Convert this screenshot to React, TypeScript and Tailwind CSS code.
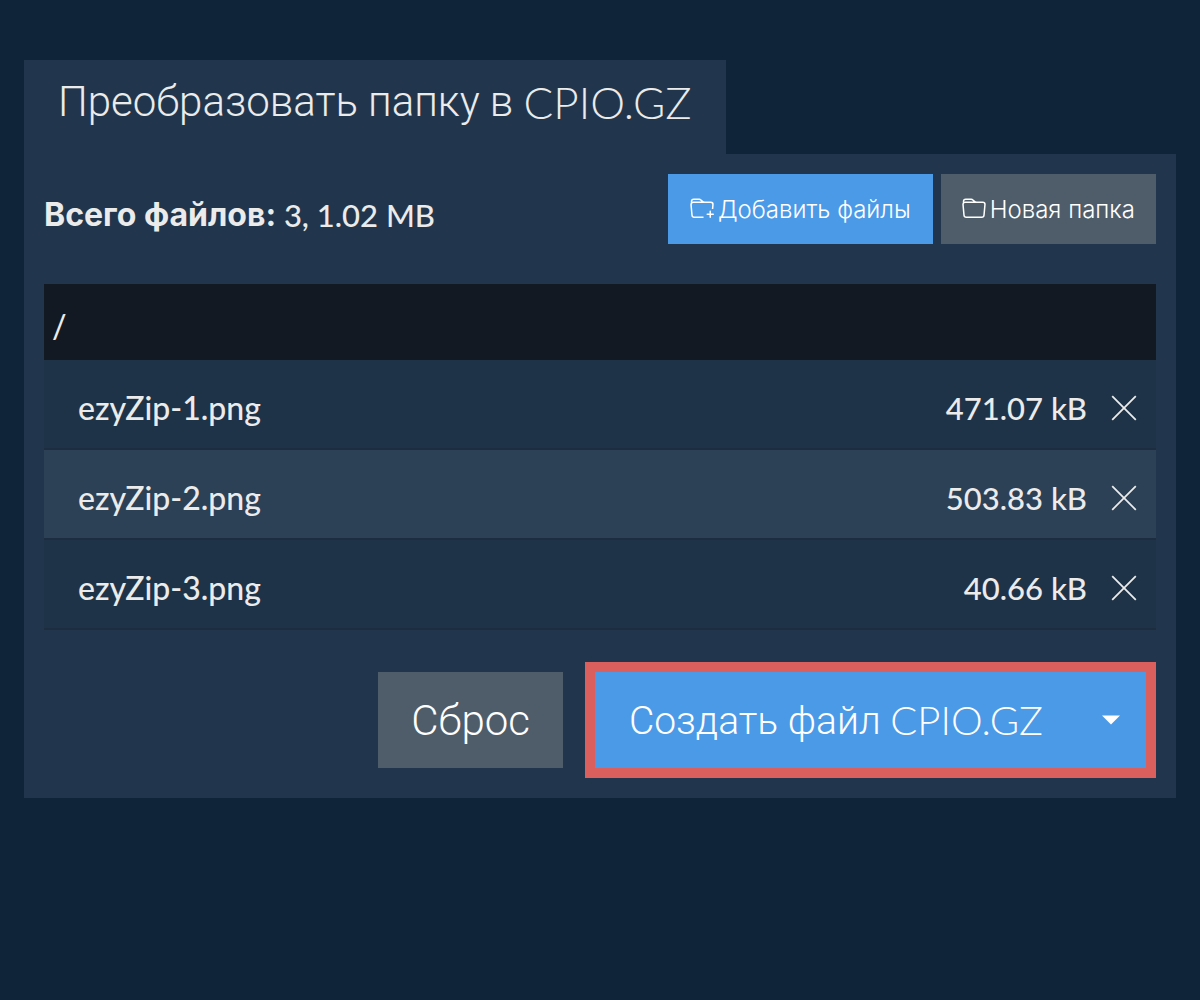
import { BsFolder, BsFolderPlus } from "react-icons/bs";

const files = [
  { name: "ezyZip-1.png", size: "471.07 kB" },
  { name: "ezyZip-2.png", size: "503.83 kB" },
  { name: "ezyZip-3.png", size: "40.66 kB" },
];

function CloseIcon() {
  return (
    <svg viewBox="0 0 26 26" className="size-6.5" fill="none" stroke="currentColor" strokeWidth="1.8" aria-hidden="true">
      <path d="M1.2 1.2 24.8 24.8M24.8 1.2 1.2 24.8" />
    </svg>
  );
}

export default function App() {
  return (
    <main className="min-h-screen bg-[#0f2438] px-6 py-15 font-['Lato',sans-serif] text-[#ebebeb]">
      <h1 className="flex h-[94px] w-fit items-start bg-[#21364c] px-[34px] pt-4 leading-[52px] font-light whitespace-pre">
        <span className="font-['Roboto',sans-serif] text-[42px]">Преобразовать папку в </span>
        <span className="text-[44px]">CPIO.GZ</span>
      </h1>

      <section className="bg-[#21364c] p-5">
        <div className="flex items-center justify-between">
          <p className="flex pt-3 text-[31px] leading-10 font-medium whitespace-pre">
            <strong className="font-['Inter',sans-serif] text-[32px] font-bold">Всего файлов:</strong>
            <span> 3, 1.02 MB</span>
          </p>
          <div className="flex gap-2 font-['Inter',sans-serif] text-2xl font-light text-white">
            <button type="button" className="flex h-[70px] items-center gap-1 bg-[#4b9ae8] px-[22px]">
              <BsFolderPlus className="size-6" />
              <span className="pt-0.5">Добавить файлы</span>
            </button>
            <button type="button" className="flex h-[70px] items-center gap-1 bg-[#4f5d6b] px-[21px]">
              <BsFolder className="size-6" />
              <span className="pt-0.5">Новая папка</span>
            </button>
          </div>
        </div>

        <table className="mt-10 w-full border-separate border-spacing-0 text-[32px] leading-10 font-medium">
          <thead>
            <tr className="h-[76px] bg-[#121922]">
              <th colSpan={3} scope="colgroup" className="px-2 pt-2 text-left font-medium">/</th>
            </tr>
          </thead>
          <tbody>
            {files.map((file) => (
              <tr key={file.name} className="h-[90px] bg-[#1f3348] even:bg-[#2c4056]">
                <td className="border-b-2 border-[#1c2d3f] pt-2 pl-[34px]">{file.name}</td>
                <td className="border-b-2 border-[#1c2d3f] pt-2 text-right text-[31px]">{file.size}</td>
                <td className="w-[69px] border-b-2 border-[#1c2d3f] pt-2 pr-[19px]">
                  <button type="button" aria-label={`Удалить ${file.name}`} className="ml-auto block">
                    <CloseIcon />
                  </button>
                </td>
              </tr>
            ))}
          </tbody>
        </table>

        <div className="mt-8 flex items-center justify-end gap-[22px] leading-12 font-light text-white">
          <button type="button" className="h-24 bg-[#4f5d6b] px-[33px] pt-0.5 font-['Roboto',sans-serif] text-[42px]">
            Сброс
          </button>
          <div className="flex border-10 border-[#db5f5c] bg-[#4b9ae8]">
            <button type="button" className="flex h-24 items-center pl-[34px] text-[40px] whitespace-pre">
              <span className="pt-0.5 font-['Roboto',sans-serif] text-[39px]">Создать файл </span>
              <span>CPIO.GZ</span>
            </button>
            <button type="button" aria-label="Другие форматы" className="flex w-[103px] items-center justify-end pr-[25px]">
              <svg viewBox="0 0 20 10" className="h-2.5 w-5" fill="currentColor" aria-hidden="true">
                <path d="M1 .5h18L10 9.5Z" />
              </svg>
            </button>
          </div>
        </div>
      </section>
    </main>
  );
}
